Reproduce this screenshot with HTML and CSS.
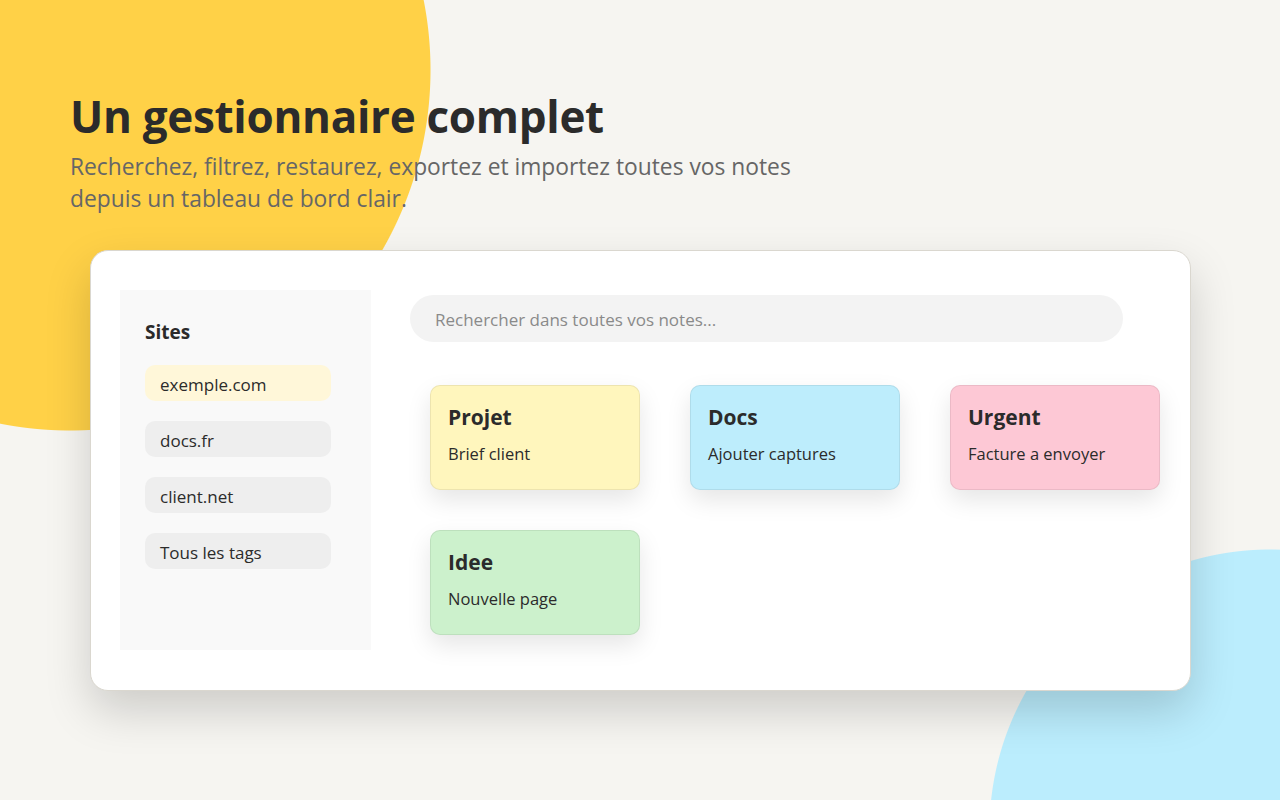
FILE: index.html
```html
<!DOCTYPE HTML>
<html lang="fr">
  <head>
    <meta charset="utf-8">
    <title>Un gestionnaire complet</title>
    <link rel="stylesheet" href="styles.css">
  </head>
  <body>
    <div class="page">
      <header class="intro">
        <h1>Un gestionnaire complet</h1>
        <p>Recherchez, filtrez, restaurez, exportez et importez toutes vos notes depuis un tableau de bord clair.</p>
      </header>
      <div class="window">
        <aside class="sidebar">
          <h2>Sites</h2>
          <ul class="sites">
            <li class="active">exemple.com</li>
            <li>docs.fr</li>
            <li>client.net</li>
            <li>Tous les tags</li>
          </ul>
        </aside> <!-- .sidebar -->
        <main class="main">
          <div class="search">Rechercher dans toutes vos notes...</div>
          <div class="notes">
            <div class="note yellow">
              <h3>Projet</h3>
              <p>Brief client</p>
            </div>
            <div class="note blue">
              <h3>Docs</h3>
              <p>Ajouter captures</p>
            </div>
            <div class="note pink">
              <h3>Urgent</h3>
              <p>Facture a envoyer</p>
            </div>
            <div class="note green">
              <h3>Idee</h3>
              <p>Nouvelle page</p>
            </div>
          </div> <!-- .notes -->
        </main>
      </div> <!-- .window -->
    </div> <!-- .page -->
  </body>
</html>
```

FILE: styles.css
```css
* {
  margin: 0;
  padding: 0;
  box-sizing: border-box; }

html, body {
  height: 100%; }

/* the two round blobs are painted as background, behind the window */
body {
  background:
    radial-gradient(circle at 70px 70px, #ffd147 360px, rgba(255, 209, 71, 0) 361px),
    radial-gradient(circle at 1270px 830px, #bbedfd 280px, rgba(187, 237, 253, 0) 281px),
    #f6f5f1;
  font-family: "Open Sans", "Noto Sans", sans-serif;
  color: #2b2b2b;
  overflow: hidden; }

.page {
  padding: 88px 70px 0; }

.intro h1 {
  font-size: 44px;
  line-height: 56px;
  font-weight: 700;
  letter-spacing: -0.3px;
  color: #2b2b2b; }

.intro p {
  max-width: 760px;
  margin-top: 7px;
  font-size: 22.8px;
  line-height: 32px;
  color: #666; }

.window {
  display: flex;
  gap: 39px;
  width: 1101px;
  height: 441px;
  margin: 35px 0 0 20px;
  padding: 39px 29px 40px;
  background: #fff;
  border: 1px solid #dad7cf;
  border-radius: 18px;
  box-shadow: 0 20px 45px rgba(0, 0, 0, 0.17); }

.sidebar {
  width: 251px;
  padding: 27px 40px 25px 25px;
  background: #f9f9f9; }

.sidebar h2 {
  font-size: 19px;
  line-height: 30px;
  font-weight: 700;
  margin-bottom: 18px; }

.sites {
  list-style: none;
  display: flex;
  flex-direction: column;
  gap: 20px; }

.sites li {
  height: 36px;
  padding: 0 15px;
  line-height: 40px;
  font-size: 17px;
  background: #eeeeee;
  border-radius: 10px; }

.sites li.active {
  background: #fff7d9; }

.main {
  width: 750px;
  padding-top: 5px; }

.search {
  width: 95%;
  height: 47px;
  padding: 0 25px;
  line-height: 49px;
  font-size: 17px;
  color: #8a8a8a;
  background: #f3f3f3;
  border-radius: 24px; }

.notes {
  display: grid;
  grid-template-columns: repeat(3, 210px);
  column-gap: 50px;
  row-gap: 40px;
  margin-top: 43px;
  padding-left: 20px; }

.note {
  height: 105px;
  padding: 16px 17px;
  border: 1px solid rgba(0, 0, 0, 0.07);
  border-radius: 10px;
  box-shadow: 0 10px 25px rgba(0, 0, 0, 0.1); }

.note h3 {
  font-size: 21px;
  line-height: 30px;
  font-weight: 700; }

.note p {
  margin-top: 10px;
  font-size: 16.5px;
  line-height: 24px; }

.yellow {
  background: #fff6bd; }

.blue {
  background: #bdedfc; }

.pink {
  background: #fdc8d5; }

.green {
  background: #ccf1cc; }
```
